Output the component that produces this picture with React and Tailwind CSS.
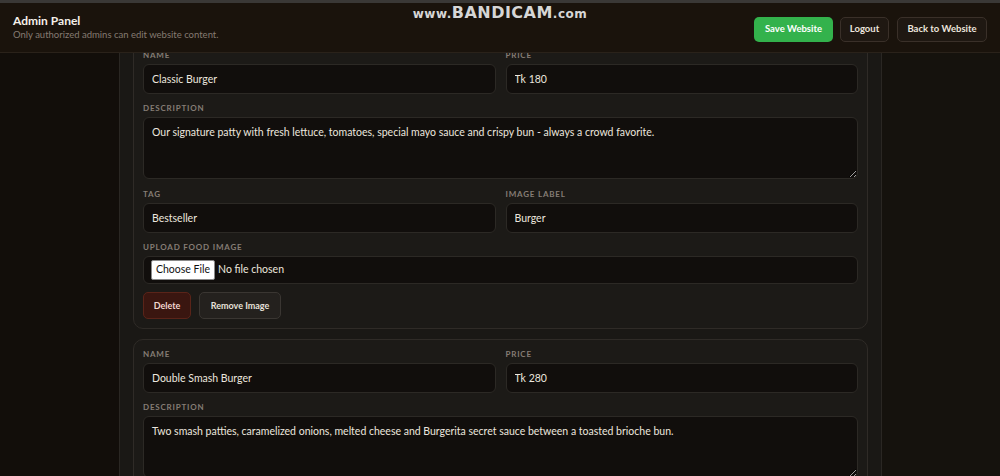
import { useState } from "react";

const dishes = [
  {
    name: "Classic Burger",
    price: "Tk 180",
    description:
      "Our signature patty with fresh lettuce, tomatoes, special mayo sauce and crispy bun - always a crowd favorite.",
    tag: "Bestseller",
    imageLabel: "Burger",
  },
  {
    name: "Double Smash Burger",
    price: "Tk 280",
    description:
      "Two smash patties, caramelized onions, melted cheese and Burgerita secret sauce between a toasted brioche bun.",
    tag: "New",
    imageLabel: "Burger",
  },
];

function Label({ children }) {
  return (
    <div className="text-[8px] font-bold uppercase tracking-[0.1em] text-[#857d75] leading-[9px] mb-[4px]">
      {children}
    </div>
  );
}

function TextField({ value }) {
  return (
    <input
      defaultValue={value}
      className="w-full h-[30px] px-[8px] rounded-[6px] bg-[#110e0c] border border-[#2c2925] text-[10.5px] text-[#ece6df] outline-none"
    />
  );
}

function DishCard({ dish }) {
  return (
    <div className="rounded-[10px] border border-[#2f2b27] bg-[#1c1a17] px-[9px] pt-[10px] pb-[9px] flex flex-col">
      <div className="grid grid-cols-2 gap-x-[10px]">
        <div>
          <Label>Name</Label>
          <TextField value={dish.name} />
        </div>
        <div>
          <Label>Price</Label>
          <TextField value={dish.price} />
        </div>
      </div>

      <div className="mt-[10px]">
        <Label>Description</Label>
        <textarea
          defaultValue={dish.description}
          className="block w-full h-[62px] px-[8px] py-[7px] rounded-[6px] bg-[#110e0c] border border-[#2c2925] text-[10.5px] text-[#ece6df] outline-none"
        />
      </div>

      <div className="mt-[11px] grid grid-cols-2 gap-x-[10px]">
        <div>
          <Label>Tag</Label>
          <TextField value={dish.tag} />
        </div>
        <div>
          <Label>Image Label</Label>
          <TextField value={dish.imageLabel} />
        </div>
      </div>

      <div className="mt-[10px]">
        <Label>Upload Food Image</Label>
        <div className="h-[28px] flex items-center px-[7px] rounded-[6px] bg-[#110e0c] border border-[#2c2925]">
          <input
            type="file"
            className="text-[10.5px] text-[#ece6df] file:mr-[3px] file:px-[4px] file:py-[1px] file:bg-white file:text-[#111] file:border file:border-[#8a8a8a] file:rounded-[2px] file:text-[10.5px]"
          />
        </div>
      </div>

      <div className="mt-[8px] flex gap-[8px]">
        <button className="h-[27px] w-[48px] rounded-[5px] bg-[#3a1610] border border-[#5a2419] text-[9px] font-bold text-[#f1d6cf]">
          Delete
        </button>
        <button className="h-[27px] w-[82px] rounded-[5px] bg-[#24211e] border border-[#3a3632] text-[9px] font-bold text-[#e7e1da]">
          Remove Image
        </button>
      </div>
    </div>
  );
}

export default function App() {
  const [items] = useState(dishes);

  return (
    <div
      className="h-[476px] overflow-hidden bg-[#120e0a] relative"
      style={{ fontFamily: "Lato, 'Noto Sans', sans-serif" }}
    >
      {/* Admin header, pinned over the scrolled editor */}
      <header className="absolute top-0 left-0 right-0 z-10 h-[53px] bg-[#1a130c] border-b border-[#2a221a]">
        <div className="h-[3px] bg-[#3a3836]" />
        <div className="h-[50px] flex items-center justify-between pl-[13px] pr-[13px]">
          <div className="flex flex-col -mt-[2px]">
            <span className="text-[12px] font-bold text-[#f5f0ea] leading-[14px]">Admin Panel</span>
            <span className="text-[9.5px] text-[#857b72] leading-[13px]">
              Only authorized admins can edit website content.
            </span>
          </div>
          <div className="flex gap-[7px] mt-[3px]">
            <button className="h-[25px] w-[79px] rounded-[5px] bg-[#33b24c] text-[9.5px] font-bold text-white">
              Save Website
            </button>
            <button className="h-[25px] w-[49px] rounded-[5px] bg-[#1f1812] border border-[#3a3029] text-[9.5px] font-bold text-[#ece5dd]">
              Logout
            </button>
            <button className="ml-[1px] h-[25px] w-[90px] rounded-[5px] bg-[#1f1812] border border-[#3a3029] text-[9.5px] font-bold text-[#ece5dd]">
              Back to Website
            </button>
          </div>
        </div>
        <div className="absolute top-[3px] left-0 right-0 flex justify-center pointer-events-none">
          <span
            className="font-bold text-[#d6d6d6] leading-[20px] tracking-[0.03em]"
            style={{ fontFamily: "'DejaVu Sans', sans-serif" }}
          >
            <span className="text-[12px]">www.</span>
            <span className="text-[16px]">BANDICAM</span>
            <span className="text-[12px]">.com</span>
          </span>
        </div>
      </header>

      {/* Menu editor */}
      <main className="flex">
        <div className="w-[119px] shrink-0" />
        <section className="w-[763px] shrink-0 bg-[#1a1815] border-x border-[#2a2723] px-[13px] pt-[40px] flex flex-col gap-[10px] min-h-[476px]">
          {items.map((dish) => (
            <DishCard key={dish.name} dish={dish} />
          ))}
        </section>
        <div className="flex-1 bg-[#15120d]" />
      </main>
    </div>
  );
}
